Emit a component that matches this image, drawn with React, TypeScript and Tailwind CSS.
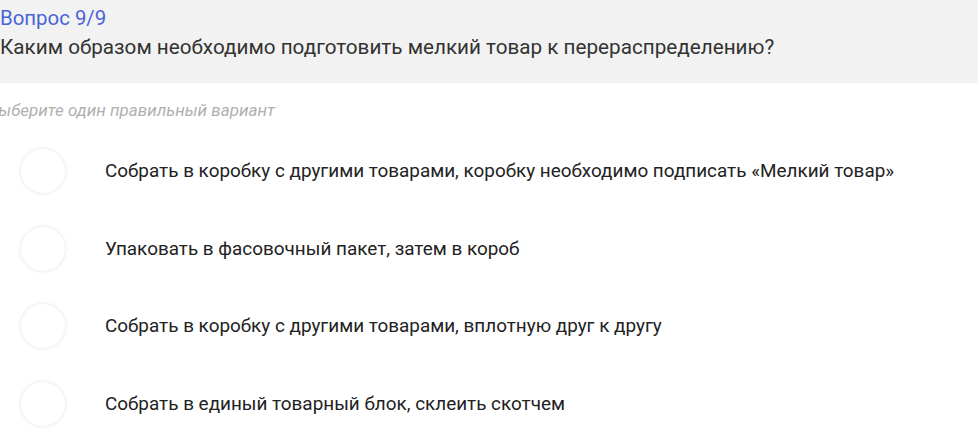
import React from 'react';

const options = [
  'Собрать в коробку с другими товарами, коробку необходимо подписать «Мелкий товар»',
  'Упаковать в фасовочный пакет, затем в короб',
  'Собрать в коробку с другими товарами, вплотную друг к другу',
  'Собрать в единый товарный блок, склеить скотчем',
];

export default function App() {
  return (
    <div className="w-[978px] h-[446px] overflow-hidden bg-white font-['Roboto',sans-serif]">
      {/* Header */}
      <div className="h-[83px] bg-[#f2f2f2] pt-[5px]">
        <p className="text-[20.4px] leading-[26px] text-[#4a64d8]">Вопрос 9/9</p>
        <p className="mt-[3px] text-[20.7px] leading-[26px] text-[#333333]">
          Каким образом необходимо подготовить мелкий товар к перераспределению?
        </p>
      </div>

      <p className="mt-[17px] -ml-[12px] text-[17px] leading-[20px] italic text-[#b0b0b0]">
        Выберите один правильный вариант
      </p>

      {/* Options */}
      <div className="mt-[29px] flex flex-col gap-[33.5px]">
        {options.map((text) => (
          <div key={text} className="flex items-center">
            <div className="ml-[21px] w-[44px] h-[44px] shrink-0 rounded-full bg-white shadow-[0_0_4px_rgba(0,0,0,0.12)]" />
            <span className="ml-[40px] text-[18.9px] leading-[24px] text-[#222222]">{text}</span>
          </div>
        ))}
      </div>
    </div>
  );
}
